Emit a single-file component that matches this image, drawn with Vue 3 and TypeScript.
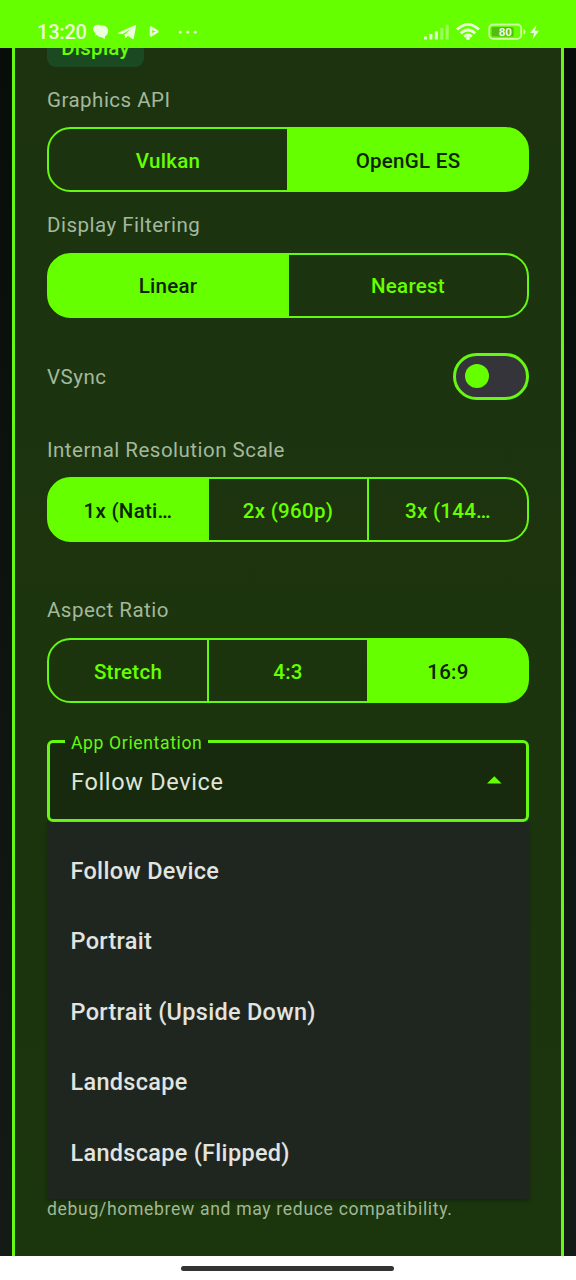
<script setup lang="ts">
import { ref } from 'vue'

interface Choice {
  options: string[]
  selected: number
}

const api = ref<Choice>({ options: ['Vulkan', 'OpenGL ES'], selected: 1 })
const filtering = ref<Choice>({ options: ['Linear', 'Nearest'], selected: 0 })
const scale = ref<Choice>({ options: ['1x (Nati…', '2x (960p)', '3x (144…'], selected: 0 })
const aspect = ref<Choice>({ options: ['Stretch', '4:3', '16:9'], selected: 2 })

const groups = [
  { label: 'Graphics API', choice: api, cls: 'api' },
  { label: 'Display Filtering', choice: filtering, cls: 'filtering' },
]
const lowerGroups = [
  { label: 'Internal Resolution Scale', choice: scale, cls: 'scale' },
  { label: 'Aspect Ratio', choice: aspect, cls: 'aspect' },
]

const vsync = ref(false)
const orientation = ref('Follow Device')
const orientations = ['Follow Device', 'Portrait', 'Portrait (Upside Down)', 'Landscape', 'Landscape (Flipped)']
</script>

<template>
  <div class="phone">
    <header class="status">
      <span class="time">13:20</span>
      <svg class="notif" width="110" height="20" viewBox="0 0 110 20">
        <g fill="#ecffdc">
          <path d="M8 3 C3 2 .8 5 1.2 7.500 C1.400 9.400 2.400 10.500 3.800 11.200 L3.200 13.600 L7 12.200 Z" />
          <path d="M9.400 3.200 C14 3.200 16.200 6 16.200 9 C16.200 11.600 14.800 13.200 13.200 14.200 L12.600 17 L9.600 15.200 C5.800 15.200 4 12.300 4 9.200 C4 5.800 6.200 3.200 9.400 3.200 Z" />
          <path d="M26.200 10.700 L42.800 3.200 C43.800 2.800 44.200 3.400 44 4.400 L41.900 16 C41.700 17.200 41 17.400 40.100 16.800 L35.800 13.700 L33.400 16.200 L32.400 12.700 L39.500 6.700 L30.600 12 L26.300 11.600 C25.600 11.300 25.600 11 26.200 10.700 Z" />
          <circle cx="88.300" cy="10" r="1.600" />
          <circle cx="95.800" cy="10" r="1.600" />
          <circle cx="103.300" cy="10" r="1.600" />
        </g>
        <path d="M59 5.600 L65.500 9.500 L59 13.400 Z" fill="none" stroke="#ecffdc" stroke-width="2.500" stroke-linejoin="round" />
      </svg>
      <svg class="system" width="118" height="20" viewBox="0 0 118 20">
        <g fill="#e4ffcf">
          <rect x="2" y="14.600" width="3" height="3" rx=".6" />
          <rect x="7.400" y="12" width="3" height="5.600" rx=".6" />
          <rect x="12.800" y="9.300" width="3" height="8.300" rx=".6" />
          <rect x="18.300" y="6" width="3" height="11.600" rx=".6" opacity=".45" />
          <rect x="23.700" y="2.600" width="3" height="15" rx=".6" opacity=".45" />
        </g>
        <g fill="none" stroke="#ecffdc" stroke-width="2.800">
          <path d="M35 7.600 Q46 -2.800 57 7.600" />
          <path d="M38.700 11.300 Q46 4.600 53.300 11.300" />
          <path d="M42.200 14.600 Q46 11.500 49.800 14.600" />
        </g>
        <circle cx="46" cy="16.200" r="1.900" fill="#ecffdc" />
        <rect x="67.200" y="2.500" width="32" height="14.300" rx="4" fill="none" stroke="#d2ffab" stroke-width="1.800" />
        <rect x="69.600" y="4.900" width="22" height="9.500" rx="1.500" fill="#52bd10" />
        <path d="M101.500 7 Q103.500 7.400 103.500 9.800 Q103.500 12.200 101.500 12.600 Z" fill="#d2ffab" />
        <text x="83.300" y="13.900" text-anchor="middle" class="level">80</text>
        <path d="M114.600 2.800 L108 11 H112 L110.600 17.200 L117 8.700 H113 Z" fill="#ecffdc" />
      </svg>
    </header>

    <main class="screen">
      <section class="card">
        <div class="chip">Display</div>

        <div v-for="g in groups" :key="g.label" class="group" :class="g.cls">
          <div class="label">{{ g.label }}</div>
          <div class="segments">
            <button
              v-for="(o, i) in g.choice.value.options"
              :key="o"
              class="segment"
              :class="{ on: i === g.choice.value.selected }"
              @click="g.choice.value.selected = i"
            >{{ o }}</button>
          </div>
        </div>

        <div class="toggle-row">
          <span class="label">VSync</span>
          <button class="switch" :class="{ checked: vsync }" aria-label="VSync" @click="vsync = !vsync">
            <span class="thumb"></span>
          </button>
        </div>

        <div v-for="g in lowerGroups" :key="g.label" class="group" :class="g.cls">
          <div class="label">{{ g.label }}</div>
          <div class="segments">
            <button
              v-for="(o, i) in g.choice.value.options"
              :key="o"
              class="segment"
              :class="{ on: i === g.choice.value.selected }"
              @click="g.choice.value.selected = i"
            >{{ o }}</button>
          </div>
        </div>

        <fieldset class="field">
          <legend><span>App Orientation</span></legend>
          <div class="value">
            <span>{{ orientation }}</span>
            <svg width="15" height="8" viewBox="0 0 15 8"><path d="M0 7.500 L7.300 .2 L14.600 7.500 Z" fill="#66ff00" /></svg>
          </div>
        </fieldset>

        <ul class="menu">
          <li v-for="o in orientations" :key="o" @click="orientation = o">{{ o }}</li>
        </ul>

        <p class="hint">debug/homebrew and may reduce compatibility.</p>
      </section>
    </main>

    <footer class="nav"><span class="pill"></span></footer>
  </div>
</template>

<style>
body {
  background: #fff;
}
</style>

<style scoped>
.phone {
  width: 576px;
  height: 1280px;
  display: flex;
  flex-direction: column;
  overflow: hidden;
  font-family: Roboto, "Noto Sans", sans-serif;
}
.status {
  height: 48px;
  flex: none;
  box-sizing: border-box;
  padding: 22px 36px 0 37px;
  display: flex;
  align-items: flex-start;
  background: #66ff00;
}
.time {
  width: 55px;
  font-size: 20px;
  font-weight: 500;
  line-height: 21px;
  letter-spacing: -0.2px;
  color: #ecffdc;
}
.notif {
  flex: none;
}
.system {
  flex: none;
  margin-left: auto;
}
.level {
  font: 700 11.500px Roboto, sans-serif;
  fill: #f0ffe2;
}
.screen {
  flex: 1;
  min-height: 0;
  overflow: hidden;
  padding: 0 12px;
  background: linear-gradient(#070d09, #141b17);
}
.card {
  height: 1208px;
  box-sizing: border-box;
  border: 3px solid #66f712;
  border-width: 0 3px;
  padding: 0 32px;
  background: linear-gradient(#1d3310, #1b350d);
  display: flex;
  flex-direction: column;
}
.chip {
  flex: none;
  align-self: flex-start;
  box-sizing: border-box;
  width: 97px;
  height: 38.500px;
  margin-top: -20px;
  padding-top: 1px;
  border-radius: 9px;
  background: #1b4a22;
  color: #66ff00;
  font-size: 20.530px;
  font-weight: 500;
  line-height: 38.500px;
  letter-spacing: 0.25px;
  text-align: center;
}
.label {
  font-size: 20.530px;
  line-height: 29px;
  letter-spacing: 0.48px;
  color: #a3b99c;
}
.group {
  flex: none;
}
.api {
  margin-top: 19px;
}
.filtering {
  margin-top: 19px;
}
.scale {
  margin-top: 36px;
}
.aspect {
  margin-top: 54px;
}
.segments {
  display: flex;
  height: 65px;
  margin-top: 12.500px;
}
.segment {
  flex: 1 1 0;
  min-width: 0;
  margin: 0;
  padding: 2px 0 0;
  border: 2px solid #66f712;
  background: transparent;
  color: #66ff00;
  font: 500 20.530px Roboto, sans-serif;
  letter-spacing: 0.27px;
  white-space: nowrap;
}
.aspect .segment {
  padding-top: 3px;
}
.segment + .segment {
  margin-left: -2px;
}
.segment:first-child {
  border-radius: 23.500px 0 0 23.500px;
}
.segment:last-child {
  border-radius: 0 23.500px 23.500px 0;
}
.segment.on {
  background: #66ff00;
  border-color: #66ff00;
  color: #0c2400;
}
.toggle-row {
  flex: none;
  height: 47px;
  margin-top: 35px;
  display: flex;
  align-items: center;
  justify-content: space-between;
}
.toggle-row .label {
  padding-top: 2px;
}
.switch {
  box-sizing: border-box;
  width: 76px;
  height: 47px;
  padding: 0 8.500px;
  border: 3px solid #66f712;
  border-radius: 24px;
  background: #36343b;
  display: flex;
  align-items: center;
}
.switch.checked {
  justify-content: flex-end;
}
.thumb {
  width: 24px;
  height: 24px;
  border-radius: 50%;
  background: #66ff00;
}
.field {
  flex: none;
  box-sizing: border-box;
  height: 91px;
  min-width: 0;
  margin: 28px 0 0;
  padding: 0 24px 0 21px;
  border: 3px solid #66f712;
  border-radius: 6px;
  background: #182a0e;
}
.field legend {
  height: 21px;
  margin-left: -6px;
  padding: 0 6px;
  font-size: 17.600px;
  line-height: 24px;
  letter-spacing: 0.62px;
  color: #66f712;
}
.value {
  height: 60px;
  display: flex;
  align-items: center;
  justify-content: space-between;
  font-size: 23.470px;
  letter-spacing: 0.68px;
  color: #dfe5da;
}
.value svg {
  margin-bottom: 3px;
}
.menu {
  flex: none;
  height: 377px;
  box-sizing: border-box;
  margin: 0;
  padding: 14px 24px 0 23.500px;
  list-style: none;
  background: #1f261f;
  box-shadow: 0 2px 4px rgba(0, 0, 0, 0.25);
}
.menu li {
  height: 70.500px;
  line-height: 70.500px;
  font-size: 23.470px;
  font-weight: 500;
  letter-spacing: 0.3px;
  color: #e2e4e0;
}
.hint {
  margin: 0;
  font-size: 17.600px;
  line-height: 20px;
  letter-spacing: 0.66px;
  color: #a0b896;
}
.nav {
  flex: none;
  height: 24px;
  display: flex;
  justify-content: center;
  background: #fff;
}
.pill {
  width: 213px;
  height: 5.500px;
  margin: 9.500px 1px 0 0;
  border-radius: 3px;
  background: #333;
}
</style>
